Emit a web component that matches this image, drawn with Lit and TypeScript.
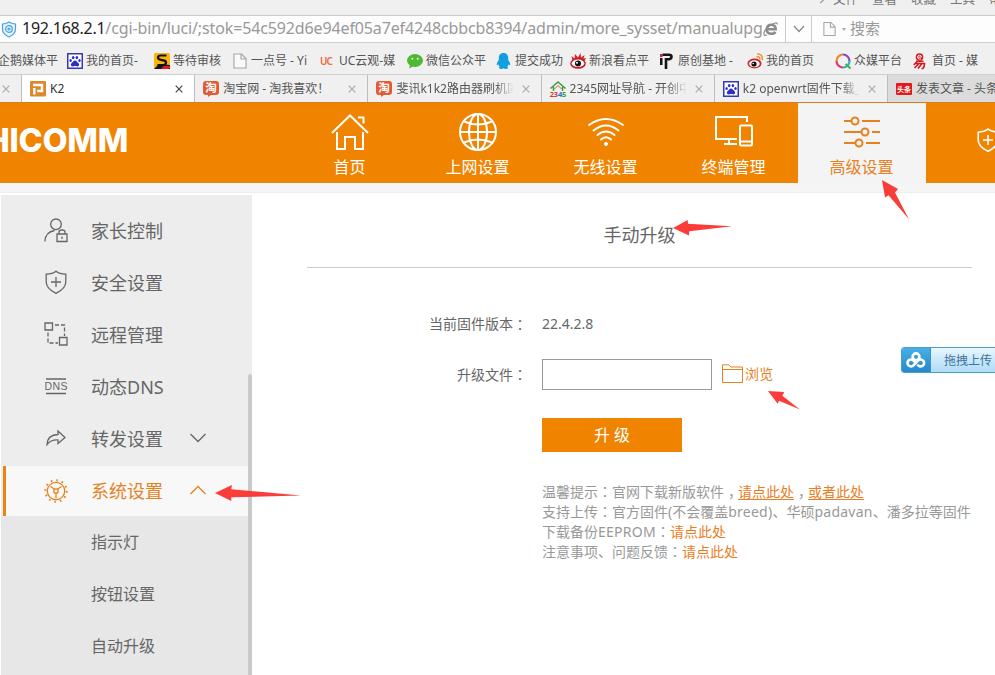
import { LitElement, html, css, svg } from "lit";
import { customElement } from "lit/decorators.js";

const paw = svg`<rect x=".75" y=".75" width="14.5" height="14.5" fill="#fff" stroke="#3439b4" stroke-width="1.5"/><g fill="#2b30c8"><ellipse cx="6.2" cy="4.6" rx="1.3" ry="1.700"/><ellipse cx="9.9" cy="4.6" rx="1.3" ry="1.700"/><ellipse cx="3.6" cy="7.6" rx="1.2" ry="1.5"/><ellipse cx="12.5" cy="7.6" rx="1.2" ry="1.5"/><path d="M8 7.400c1.600 0 2 1.600 3.300 2.700 1.500 1.300.9 3.300-.9 3.300-1 0-1.400-.4-2.400-.4s-1.400.4-2.400.4c-1.800 0-2.400-2-.9-3.300C6 9 6.400 7.400 8 7.400z"/></g>`;
const sheet = svg`<path d="M2 1h7.500L14 5.500V15H2z M9 1v5h5" fill="#fafafa" stroke="#a5a5a5" stroke-width="1.100"/>`;
const taobao = svg`<path d="M3 0h10q3 0 3 3v8q0 3-3 3H8l-3 2v-2H3q-3 0-3-3V3q0-3 3-3z" fill="#e25b32"/><text x="8" y="11.300" text-anchor="middle" font-size="11.500" font-weight="700" fill="#fff">淘</text>`;
const weiboEye = svg`<ellipse cx="7.500" cy="10.500" rx="7" ry="5" fill="#d5232b"/><ellipse cx="7.400" cy="10.700" rx="5.300" ry="3.500" fill="#fff"/><circle cx="7" cy="11" r="2.600" fill="#111"/><circle cx="6.200" cy="10.500" r=".8" fill="#fff"/>`;

const marks = [
  { label: "企鹅媒体平" },
  { icon: paw, label: "我的首页-" },
  { icon: svg`<rect width="16" height="16" rx="1.500" fill="#fbb312"/><path d="M0 16l5-5 11 1v4z" fill="#151515"/><path d="M7 16l2.500-3H16v1.500L14.500 16z" fill="#e31b20"/><path d="M12.500 2.500H6.500Q4 2.500 4 4.500t3 2.300l2.500.5q2.800.5 2.500 2.700T9 12H3.500" fill="none" stroke="#111" stroke-width="2.200"/>`, label: "等待审核" },
  { icon: sheet, label: "一点号 - Yi" },
  { icon: svg`<text x="0" y="12" font-size="10" font-weight="600" fill="#ee6a3c" textLength="13">UC</text>`, label: "UC云观-媒" },
  { icon: svg`<ellipse cx="8" cy="7.500" rx="8" ry="6.500" fill="#4fb835"/><path d="M3 12l-1 3.500 4-2z" fill="#4fb835"/><circle cx="5.300" cy="5.800" r="1" fill="#e8ffe0"/><circle cx="10.700" cy="5.800" r="1" fill="#e8ffe0"/>`, label: "微信公众平" },
  { icon: svg`<path d="M7.500 0c3.300 0 4.700 2.300 4.700 5v2c1.500 2 2.100 3.500 2 5-.4.700-1 .1-1.600-.8-.3 1.300-.8 2-1.300 2.600.8.5 1 1.200.2 1.700-1.300.7-3 .4-4-.3-1 .700-2.700 1-4 .3-.8-.5-.6-1.200.2-1.700-.5-.6-1-1.300-1.300-2.600-.6.9-1.200 1.500-1.600.8-.1-1.500.5-3 2-5V5c0-2.700 1.400-5 4.700-5z" fill="#129fe0"/>`, label: "提交成功" },
  { icon: svg`<path d="M2.500 8L1.500 3 4.500 5.500 5 1 8 4.500 10.500 0 11 4.500 14.500 2 13.500 5.500 16 5 14 9z" fill="#d5232b"/><ellipse cx="8" cy="10.500" rx="7.800" ry="5.300" fill="#c91920"/><ellipse cx="8" cy="10.300" rx="6.300" ry="3.700" fill="#fff"/><circle cx="8" cy="10.500" r="3" fill="#111"/><circle cx="7" cy="9.800" r="1" fill="#fff"/>`, label: "新浪看点平" },
  { icon: svg`<path d="M1 5h2.500v7H1z" fill="#151515"/><path d="M1 1h2.500v3H1z" fill="#c92036"/><path d="M3.500 1.800h6.500q2.500 0 2.500 2t-2.500 2.500H7V16" fill="none" stroke="#151515" stroke-width="2.600"/>`, label: "原创基地 -" },
  { icon: svg`${weiboEye}<path d="M9.500 3.800q3.500-.8 3.500 3M10 1q6-.5 5.300 6" fill="none" stroke="#ef9332" stroke-width="1.500"/>`, label: "我的首页" },
  { icon: svg`<g fill="none" stroke-width="2.200"><path d="M1.500 8A6.500 6.500 0 0 1 8 1.500" stroke="#f08a24"/><path d="M8 1.500A6.500 6.500 0 0 1 14.500 8" stroke="#8f48c8"/><path d="M14.500 8A6.500 6.500 0 0 1 8 14.500" stroke="#29b6bd"/><path d="M8 14.500A6.500 6.500 0 0 1 1.500 8" stroke="#e8356e"/><path d="M10.500 11l5 4.500" stroke="#43b649"/></g>`, label: "众媒平台" },
  { icon: svg`<circle cx="6.500" cy="4" r="3.800" fill="#d2161e"/><path d="M4.500 4.100h4q0-1.900-2-1.900t-2 1.900 2 1.900h1.500" fill="none" stroke="#fff" stroke-width=".9"/><path d="M3 8.300h7.500M4.500 8L.8 12M2.500 10.500h9q0 3.500-1.500 5H8.500M6 10.500L1.500 15M9 10.500L5 15.500" fill="none" stroke="#d2161e" stroke-width="1.600"/>`, label: "首页 - 媒" },
];

const tabs = [
  { kind: "active", icon: svg`<rect width="16" height="15.500" rx="1" fill="#e0872b"/><path d="M3 4h9v6H7.200M4.300 7v6.500" fill="none" stroke="#fff" stroke-width="2.400"/>`, label: "K2" },
  { kind: "", icon: taobao, label: "淘宝网 - 淘我喜欢！" },
  { kind: "fade", icon: taobao, label: "斐讯k1k2路由器刷机固件" },
  { kind: "fade", icon: svg`<path d="M.5 7.500L8 1l7.500 6.500M3.500 6v4M12.500 6v4" fill="none" stroke="#3d9b3c" stroke-width="1.500"/><path d="M8 4.500L4.500 8M8 4.500L11.500 8" stroke="#d9552b"/><g font-size="7.500" font-weight="700"><text x="-.3" y="16" fill="#d9372b">2</text><text x="3.800" y="16" fill="#d9372b">3</text><text x="8" y="16" fill="#2b6fd0">4</text><text x="12" y="16" fill="#3d9b3c">5</text></g>`, label: "2345网址导航 - 开创中国" },
  { kind: "fade", icon: paw, label: "k2 openwrt固件下载_百" },
  { kind: "dim", icon: svg`<rect y="2" width="16" height="12" rx="1" fill="#e5171b"/><text x="8" y="11" text-anchor="middle" font-size="7" font-weight="700" fill="#fff">头条</text>`, label: "发表文章 - 头条号" },
];

const shield = svg`<path d="M12 1.200C9.500 3.200 6 4 2.200 4.200V12c0 5.500 4 8.500 9.800 11.300C17.800 20.500 21.800 17.500 21.800 12V4.200C18 4 14.500 3.200 12 1.200zM12 7v10M7 12h10"/>`;

const nav = [
  { label: "首页", icon: svg`<path d="M1 20L19 2.500 37 20M27 4.500h5.500v6M6 19v17h8V24h10v12h8V19"/>` },
  { label: "上网设置", icon: svg`<circle cx="19" cy="19" r="18"/><ellipse cx="19" cy="19" rx="9" ry="18"/><path d="M19 1v36M1 19h36M5 8.500q14 6 28 0M5 29.500q14-6 28 0"/>` },
  { label: "无线设置", icon: svg`<path d="M2 12q17-12 34 0M6.500 17.500q12.500-10 25 0M10.500 22q8.500-7 17 0M14 26.500q5-4.500 10 0" stroke-linecap="round"/><circle cx="19" cy="31" r="1.600" fill="currentColor" stroke-width="1"/>` },
  { label: "终端管理", icon: svg`<path d="M32 9V4H1v22h21M14 26v4M9 31h13"/><rect x="25" y="12.500" width="12" height="20" rx="1"/><path d="M25 28.500h12"/>` },
  { label: "高级设置", on: true, icon: svg`<path d="M1 8h7M19 8h18M1 19h17M29 19h8M1 30h11M23 30h14"/><circle cx="12" cy="8" r="3.500"/><circle cx="22" cy="19" r="3.500"/><circle cx="16" cy="30" r="3.500"/>` },
];

const gear = svg`<circle cx="12" cy="12" r="8.700"/><circle cx="12" cy="12" r="10.700" stroke-width="2" stroke-dasharray="1.600 4"/><circle cx="12" cy="12" r="2.200"/><path d="M10.500 10.300L6.500 7.500M13.500 10.300l4-2.800M12 14.200v5"/>`;

const side = [
  { label: "家长控制", icon: svg`<circle cx="12" cy="5.300" r="5.300"/><path d="M.8 22.500Q1.500 13 10.500 11.500M13 15h10v7.500H13zM15 15v-2q0-2 3-2t3 2v2M18 17.500v2.500"/>` },
  { label: "安全设置", icon: svg`<g transform="translate(0 -1)">${shield}</g>` },
  { label: "远程管理", icon: svg`<path d="M1 0h7.500v7H1zM15.500 14.500H23V22h-7.500z"/><path d="M11 2h9.500v11M4 9.500V20h10" stroke-dasharray="4 2"/>` },
  { label: "动态DNS", icon: svg`<path d="M2 4h20M2 18.500h20"/><text x="12" y="15" text-anchor="middle" font-size="10.500" font-family="Liberation Sans, sans-serif" fill="currentColor" stroke="none" textLength="23">DNS</text>` },
  { label: "转发设置", icon: svg`<path d="M3 17.500Q3.500 8 14 7.500V4L21 10.500l-7 6v-3.500Q7 12.500 3 17.500z"/>`, chev: "M1.500 0l7.500 7.500 7.500-7.500" },
  { label: "系统设置", icon: gear, chev: "M1.500 8l7.500-7.500 7.500 7.500", on: true },
];

@customElement("app-root")
export class AppRoot extends LitElement {
  static styles = css`
    :host { display: block; position: relative; width: 995px; height: 675px; overflow: hidden; background: #fff; color: #666;
      font-family: "Noto Sans", "Noto Sans CJK SC", sans-serif; font-size: 12px; white-space: nowrap; }
    * { box-sizing: border-box; }
    svg { display: block; flex: none; overflow: visible; }
    .menu { height: 15px; background: #f0f0f0; display: flex; justify-content: flex-end; overflow: hidden; }
    .menu span { width: 39px; line-height: 17px; height: 17px; margin-top: -9px; font-size: 12.500px; color: #777; }
    .menu span:first-child { width: 15px; }
    .menu span:last-child { width: 6px; overflow: hidden; }
    .address { height: 28px; border: solid #cbcbcb; border-width: 1px 0; background: #fdfdfd; display: flex; align-items: center; }
    .guard { margin-left: 1px; width: 21px; }
    .url { width: 741px; height: 26px; line-height: 25px; font-size: 16px; letter-spacing: -.13px; color: #999; overflow: hidden; }
    .url b { font-weight: 400; color: #222; letter-spacing: -.25px; }
    .engine { width: 22px; }
    .drop { width: 27px; height: 26px; border: solid #ccc; border-width: 0 1px; display: grid; place-items: center; }
    .find { display: flex; align-items: center; margin-left: 10px; font-size: 15px; color: #999; line-height: 24px; }
    .caret { border: solid transparent; border-width: 3px 2.500px 0; border-top-color: #aaa; margin: 0 4px 0 5px; }
    .find span { margin-top: -2px; }
    .marks { height: 31px; background: #f0f0f0; display: grid; grid-template-columns: 67px 87px 78px 88px 87px 89px 74px 89px 88px 88px 78px 82px; align-items: center; padding-top: 4px; color: #555; }
    .mark { display: flex; align-items: center; gap: 3px; line-height: 18px; }
    .mark:first-child { margin-left: -2px; }
    .tabs { height: 29px; display: flex; background: #f0f0f0; border-top: 1px solid #cfcfcf; border-bottom: 1px solid #d97d1d; }
    .stub { width: 21px; flex: none; padding-left: 2px; display: flex; align-items: center; color: #aaa; }
    .tab { width: 173.200px; flex: none; display: flex; align-items: center; padding: 0 11px 0 8px; border-left: 1px solid #bdbdbd; }
    .tab .name { margin-left: 4px; flex: 1; width: 0; overflow: hidden; line-height: 27px; color: #555; }
    .fade .name { margin-right: 8px; -webkit-mask-image: linear-gradient(90deg, #000 84%, transparent); mask-image: linear-gradient(90deg, #000 84%, transparent); }
    .active { background: #fff; }
    .active .name { color: #333; }
    .dim { background: #dcdcdc; }
    .dim .name { overflow: visible; }
    .close { color: #aaa; }
    .active .close { color: #444; }
    .top { height: 80px; background: #f08300; display: flex; color: #fff; overflow: hidden; }
    .brand { width: 128px; flex: none; margin-right: 158px; display: flex; justify-content: flex-end; align-items: center; font: 800 32.500px/75px Inter, sans-serif; letter-spacing: -.3px; overflow: hidden; height: 75px; }
    .nav { width: 128px; flex: none; display: flex; flex-direction: column; align-items: center; padding-top: 10px; font-size: 16px; }
    .nav svg { margin-left: -1px; }
    .nav span { line-height: 24px; margin: 4px 0 0 -1px; }
    .nav.on { background: #f4f4f4; color: #e6821e; }
    .nav svg, .line { fill: none; stroke: currentColor; stroke-width: 2; }
    .top .line { stroke-width: 1.600; }
    .more { flex: none; padding: 25px 0 0 50px; }
    .strip { height: 10px; background: #f5f5f5; border-bottom: 1px solid #eee; }
    .body { display: flex; height: 482px; padding: 2px 0 0 1px; }
    .side { width: 251px; background: #ededed; display: flex; }
    .list { width: 247px; padding-top: 10px; }
    .track { width: 4px; flex: none; margin-top: 179px; border-radius: 2px 2px 0 0; background: #c9c9c9; }
    .row { height: 52px; display: flex; align-items: center; padding-left: 43px; font-size: 18px; }
    .row .t { margin-left: 23px; width: 98px; line-height: 30px; }
    .row .line { stroke-width: 1.300; }
    .row.on { background: #f8f8f8; color: #e6821e; border-left: 3px solid #ea8312; margin-left: 2px; padding-left: 38px; height: 50px; margin-top: 1px; }
    .sub { background: #e7e7e7; height: 159px; padding-left: 90px; font-size: 16px; line-height: 52px; }
    .main { margin-left: 55px; width: 665px; }
    .title { height: 73px; border-bottom: 1px solid #ccc; text-align: center; font-size: 18px; line-height: 80px; }
    .form { display: grid; grid-template-columns: 220px 1fr; column-gap: 15px; font-size: 14px; }
    .ver { margin-top: 41px; line-height: 30px; height: 30px; }
    .file { margin-top: 20px; height: 31px; line-height: 29px; display: flex; align-items: center; }
    .lab { display: flex; justify-content: flex-end; }
    .box { width: 170px; height: 31px; border: 1px solid #999; margin-right: 10px; background: #fff; }
    .browse { color: #e6821e; margin: -3px 0 0 2px; letter-spacing: .2px; }
    .folder { color: #e6821e; }
    .lab.file { padding-bottom: 1px; }
    .go { grid-column: 2; width: 140px; height: 34px; margin-top: 28px; padding: 0; border: 0; background: #f08300; color: #fff; font: 16px/34px "Noto Sans", "Noto Sans CJK SC", sans-serif; }
    .tips { grid-column: 2; margin-top: 30px; line-height: 20px; color: #999; }
    .tips div { height: 20px; }
    .tips a { color: #ea7d1e; }
    .tips u { text-underline-offset: 2px; }
    .latin { letter-spacing: .25px; }
    .mid { font-family: "Noto Sans CJK TC", sans-serif; line-height: 0; }
    .lab .mid { line-height: inherit; }
    .comma { font-feature-settings: "halt"; margin: 0 3px 0 4px; }
    .upload { position: absolute; left: 901px; top: 347px; width: 110px; height: 26px; display: flex; border: 1px solid #4a9fd2; border-radius: 3px; background: linear-gradient(#eaf7ff, #c9e8fb 50%, #b0dcf7); color: #41729a; line-height: 26px; }
    .cloud { width: 29px; background: linear-gradient(#49aee6, #2588c9); display: grid; place-items: center; border-right: 1px solid #3d94cc; border-radius: 2px 0 0 2px; }
    .upload span { margin-left: 13px; }
    .arrows { position: absolute; left: 0; top: 0; fill: #fb3d3a; pointer-events: none; }
  `;

  private cross() {
    return html`<svg class="close" width="8" height="8" viewBox="0 0 8 8"><path d="M.7.7l6.600 6.600M7.300.7L.7 7.300" stroke="currentColor" stroke-width="1.200"/></svg>`;
  }

  render() {
    return html`
      <div class="menu"><span>↗</span><span>文件</span><span>查看</span><span>收藏</span><span>工具</span><span>帮助</span></div>
      <div class="address">
        <div class="guard"><svg width="16" height="17" viewBox="0 0 16 17" fill="none" stroke="#4aa0dc" stroke-width="1.200"><path d="M8 1Q5 3 1.500 3v5q0 5 6.500 8 6.500-3 6.500-8V3Q11 3 8 1z" fill="#e4f4fd"/><circle cx="8" cy="8" r="3.300"/><circle cx="8" cy="8" r="1"/></svg></div>
        <div class="url"><b>192.168.2.1</b>/cgi-bin/luci/;stok=54c592d6e94ef05a7ef4248cbbcb8394/admin/more_sysset/manualupgrade</div>
        <div class="engine"><svg width="16" height="16" viewBox="0 0 16 16" fill="none" stroke="#8c8c8c"><path d="M4 8.300h8.700Q12.700 3.800 8.300 3.800T3.800 8.300 8.300 12.800q3 0 4-2" stroke-width="2.600"/><path d="M4 14Q.5 15.500 1 12T7 4.500Q14 0 14.500 3.500" stroke-width="1.200"/></svg></div>
        <div class="drop"><svg width="12" height="8" viewBox="0 0 12 8"><path d="M1 1l5 5.500L11 1" fill="none" stroke="#888" stroke-width="1.200"/></svg></div>
        <div class="find"><svg width="15" height="16" viewBox="0 0 16 16">${sheet}</svg><i class="caret"></i><span>搜索</span></div>
      </div>
      <div class="marks">${marks.map((m) => html`<div class="mark">${m.icon ? html`<svg width="16" height="16" viewBox="0 0 16 16">${m.icon}</svg>` : ""}<span>${m.label}</span></div>`)}</div>
      <div class="tabs">
        <div class="stub">${this.cross()}</div>
        ${tabs.map((t) => html`<div class="tab ${t.kind}"><svg width="16" height="16" viewBox="0 0 16 16">${t.icon}</svg><span class="name">${t.label}</span>${t.kind === "dim" ? "" : this.cross()}</div>`)}
      </div>
      <div class="top">
        <div class="brand">PHICOMM</div>
        ${nav.map((n) => html`<div class="nav ${n.on ? "on" : ""}"><svg width="38" height="38" viewBox="0 0 38 38">${n.icon}</svg><span>${n.label}</span></div>`)}
        <div class="more"><svg class="line" width="24" height="24" viewBox="0 0 24 24">${shield}</svg></div>
      </div>
      <div class="strip"></div>
      <div class="body">
        <div class="side">
          <div class="list">
            ${side.map((s) => html`<div class="row ${s.on ? "on" : ""}"><svg class="line" width="24" height="24" viewBox="0 0 24 24">${s.icon}</svg><span class="t">${s.label}</span>${s.chev ? html`<svg class="line" width="18" height="10" viewBox="0 0 18 10"><path d="${s.chev}"/></svg>` : ""}</div>`)}
            <div class="sub"><div>指示灯</div><div>按钮设置</div><div>自动升级</div></div>
          </div>
          <div class="track"></div>
        </div>
        <div class="main">
          <div class="title">手动升级</div>
          <div class="form">
            <div class="lab ver">当前固件版本<span class="mid">：</span></div><div class="ver">22.4.2.8</div>
            <div class="lab file">升级文件<span class="mid">：</span></div>
            <div class="file"><div class="box"></div><svg class="folder" width="21" height="19" viewBox="0 0 21 19" fill="none" stroke="currentColor"><path d="M.5 17.500V-.2h6.500l2 2.200h11.500v15.500zM.5 4.500h20"/></svg><span class="browse">浏览</span></div>
            <button class="go">升 级</button>
            <div class="tips">
              <div>温馨提示<span class="mid">：</span>官网下载新版软件<span class="comma">，</span><a><u>请点此处</u></a><span class="comma">，</span><a><u>或者此处</u></a></div>
              <div>支持上传<span class="mid">：</span>官方固件(不会覆盖<span class="latin">breed)</span>、华硕<span class="latin">padavan</span>、潘多拉等固件</div>
              <div>下载备份<span class="latin">EEPROM</span><span class="mid">：</span><a>请点此处</a></div>
              <div>注意事项、问题反馈<span class="mid">：</span><a>请点此处</a></div>
            </div>
          </div>
        </div>
      </div>
      <div class="upload"><div class="cloud"><svg width="20" height="16" viewBox="0 0 20 16" fill="none" stroke="#fff" stroke-width="2.600"><circle cx="10" cy="4.800" r="3.400"/><path d="M12.400 8.200L7.500 13.400A3.500 3.500 0 1 1 7.500 8.500L9 10M11.500 12.500A3.500 3.500 0 1 0 12.400 8.200"/></svg></div><span>拖拽上传</span></div>
      <svg class="arrows" width="995" height="675" viewBox="0 0 995 675">
        <path d="M882 180L898 189 895 192.500 909 219.300 888.500 195.300 885 197.500z"/>
        <path d="M673 228L687.700 220 688 223.700 732 226.300 689.300 231.300 689 235.500z"/>
        <path d="M768 391L784.300 392 782.300 395.700 800 409.500 779 400.700 777.700 403.700z"/>
        <path d="M215 493L232 485 231.300 489.300 301 495.600 231.300 497.300 231.300 501z"/>
      </svg>`;
  }
}
